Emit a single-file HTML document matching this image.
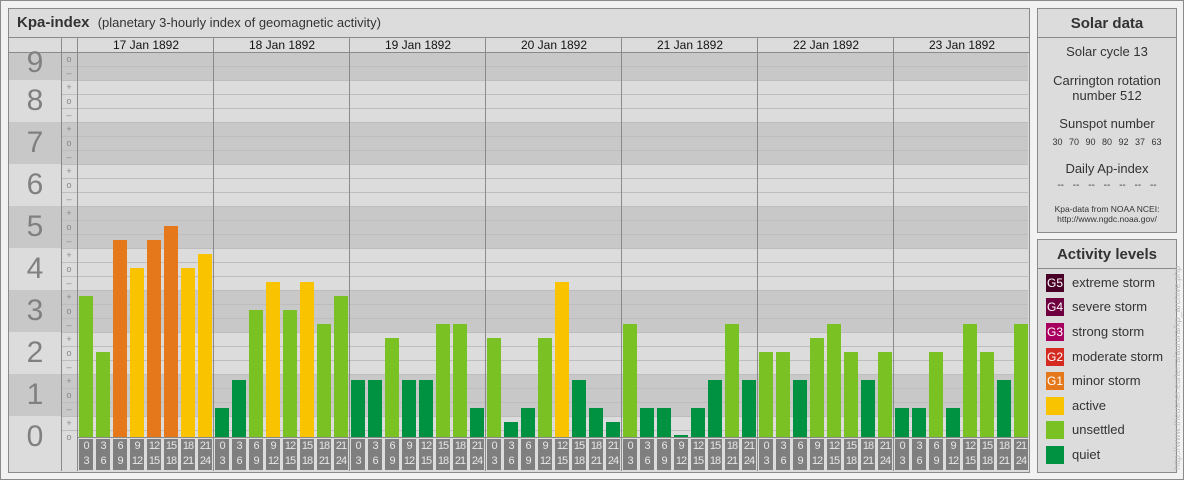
<!DOCTYPE html><html><head><style>
*{margin:0;padding:0;box-sizing:border-box}
body{width:1184px;height:480px;background:#f2f2f2;font-family:"Liberation Sans",sans-serif;position:relative;overflow:hidden}
.a{position:absolute}
.pan{position:absolute;background:#dcdcdc;border:1px solid #8a8a8a}
.band{position:absolute;left:9px;width:1019px}
.hl{position:absolute;left:61px;width:967px;height:1px;background:#bdbdbd}
.num{position:absolute;left:9px;width:52px;text-align:center;font-size:30px;color:#808080;height:42px;line-height:42px}
.sg{position:absolute;left:61px;width:16px;text-align:center;font-size:9px;color:#888;line-height:14px;height:14px}
.b{position:absolute;width:14px;bottom:43px}
.q{background:#009240}.u{background:#7ac124}.y{background:#f9c300}.o{background:#e5781a}
.t{position:absolute;top:439px;width:14px;height:31px;background:#7f7f7f;color:#e8e8e8;font-size:11px;line-height:15px;text-align:center;letter-spacing:-1px}
.vs{position:absolute;top:38px;width:1px;height:433px;background:#8a8a8a}
.dt{position:absolute;top:38px;width:136px;text-align:center;font-size:12px;line-height:14px;color:#111}
.lg{position:absolute;left:1046px;width:18px;height:18px;color:#fff;font-size:12px;line-height:18px;text-align:center}
.ll{position:absolute;left:1072px;font-size:13px;color:#333;line-height:18px}
.c{position:absolute;left:1038px;width:138px;text-align:center;color:#333}
</style></head><body>
<div class="a" style="left:0;top:0;width:1184px;height:480px;border:1px solid #8a8a8a"></div>
<div class="pan" style="left:8px;top:8px;width:1022px;height:465px"></div>
<div class="a" style="left:17px;top:14px;font-size:15px;font-weight:bold;color:#333">Kpa-index <span style="font-weight:normal;font-size:13px;margin-left:4px">(planetary 3-hourly index of geomagnetic activity)</span></div>
<div class="a" style="left:9px;top:37px;width:1020px;height:1px;background:#8a8a8a"></div>
<div class="band" style="top:52px;height:28px;background:#c8c8c8"></div>
<div class="band" style="top:122px;height:42px;background:#c8c8c8"></div>
<div class="band" style="top:206px;height:42px;background:#c8c8c8"></div>
<div class="band" style="top:290px;height:42px;background:#c8c8c8"></div>
<div class="band" style="top:374px;height:42px;background:#c8c8c8"></div>
<div class="a" style="left:9px;top:52px;width:1020px;height:1px;background:#8a8a8a"></div>
<div class="hl" style="top:66px"></div><div class="hl" style="top:80px"></div><div class="hl" style="top:94px"></div><div class="hl" style="top:108px"></div><div class="hl" style="top:122px"></div><div class="hl" style="top:136px"></div><div class="hl" style="top:150px"></div><div class="hl" style="top:164px"></div><div class="hl" style="top:178px"></div><div class="hl" style="top:192px"></div><div class="hl" style="top:206px"></div><div class="hl" style="top:220px"></div><div class="hl" style="top:234px"></div><div class="hl" style="top:248px"></div><div class="hl" style="top:262px"></div><div class="hl" style="top:276px"></div><div class="hl" style="top:290px"></div><div class="hl" style="top:304px"></div><div class="hl" style="top:318px"></div><div class="hl" style="top:332px"></div><div class="hl" style="top:346px"></div><div class="hl" style="top:360px"></div><div class="hl" style="top:374px"></div><div class="hl" style="top:388px"></div><div class="hl" style="top:402px"></div><div class="hl" style="top:416px"></div><div class="hl" style="top:430px"></div>
<div class="a" style="left:78px;top:437px;width:950px;height:1px;background:#8a8a8a"></div>
<div class="vs" style="left:61px"></div><div class="vs" style="left:77px"></div>
<div class="vs" style="left:213px"></div><div class="vs" style="left:349px"></div><div class="vs" style="left:485px"></div><div class="vs" style="left:621px"></div><div class="vs" style="left:757px"></div><div class="vs" style="left:893px"></div>
<div class="dt" style="left:78px">17 Jan 1892</div><div class="dt" style="left:214px">18 Jan 1892</div><div class="dt" style="left:350px">19 Jan 1892</div><div class="dt" style="left:486px">20 Jan 1892</div><div class="dt" style="left:622px">21 Jan 1892</div><div class="dt" style="left:758px">22 Jan 1892</div><div class="dt" style="left:894px">23 Jan 1892</div>
<div class="num" style="top:42px">9</div><div class="num" style="top:80px">8</div><div class="num" style="top:122px">7</div><div class="num" style="top:164px">6</div><div class="num" style="top:206px">5</div><div class="num" style="top:248px">4</div><div class="num" style="top:290px">3</div><div class="num" style="top:332px">2</div><div class="num" style="top:374px">1</div><div class="num" style="top:416px">0</div>
<div class="sg" style="top:52px">o</div><div class="sg" style="top:66px">–</div>
<div class="sg" style="top:80px">+</div><div class="sg" style="top:94px">o</div><div class="sg" style="top:108px">–</div>
<div class="sg" style="top:122px">+</div><div class="sg" style="top:136px">o</div><div class="sg" style="top:150px">–</div>
<div class="sg" style="top:164px">+</div><div class="sg" style="top:178px">o</div><div class="sg" style="top:192px">–</div>
<div class="sg" style="top:206px">+</div><div class="sg" style="top:220px">o</div><div class="sg" style="top:234px">–</div>
<div class="sg" style="top:248px">+</div><div class="sg" style="top:262px">o</div><div class="sg" style="top:276px">–</div>
<div class="sg" style="top:290px">+</div><div class="sg" style="top:304px">o</div><div class="sg" style="top:318px">–</div>
<div class="sg" style="top:332px">+</div><div class="sg" style="top:346px">o</div><div class="sg" style="top:360px">–</div>
<div class="sg" style="top:374px">+</div><div class="sg" style="top:388px">o</div><div class="sg" style="top:402px">–</div>
<div class="sg" style="top:416px">+</div><div class="sg" style="top:430px">o</div>
<div class="b u" style="left:79px;height:141px"></div><div class="b u" style="left:96px;height:85px"></div><div class="b o" style="left:113px;height:197px"></div><div class="b y" style="left:130px;height:169px"></div><div class="b o" style="left:147px;height:197px"></div><div class="b o" style="left:164px;height:211px"></div><div class="b y" style="left:181px;height:169px"></div><div class="b y" style="left:198px;height:183px"></div>
<div class="b q" style="left:215px;height:29px"></div><div class="b q" style="left:232px;height:57px"></div><div class="b u" style="left:249px;height:127px"></div><div class="b y" style="left:266px;height:155px"></div><div class="b u" style="left:283px;height:127px"></div><div class="b y" style="left:300px;height:155px"></div><div class="b u" style="left:317px;height:113px"></div><div class="b u" style="left:334px;height:141px"></div>
<div class="b q" style="left:351px;height:57px"></div><div class="b q" style="left:368px;height:57px"></div><div class="b u" style="left:385px;height:99px"></div><div class="b q" style="left:402px;height:57px"></div><div class="b q" style="left:419px;height:57px"></div><div class="b u" style="left:436px;height:113px"></div><div class="b u" style="left:453px;height:113px"></div><div class="b q" style="left:470px;height:29px"></div>
<div class="b u" style="left:487px;height:99px"></div><div class="b q" style="left:504px;height:15px"></div><div class="b q" style="left:521px;height:29px"></div><div class="b u" style="left:538px;height:99px"></div><div class="b y" style="left:555px;height:155px"></div><div class="b q" style="left:572px;height:57px"></div><div class="b q" style="left:589px;height:29px"></div><div class="b q" style="left:606px;height:15px"></div>
<div class="b u" style="left:623px;height:113px"></div><div class="b q" style="left:640px;height:29px"></div><div class="b q" style="left:657px;height:29px"></div><div class="b q" style="left:674px;height:2px"></div><div class="b q" style="left:691px;height:29px"></div><div class="b q" style="left:708px;height:57px"></div><div class="b u" style="left:725px;height:113px"></div><div class="b q" style="left:742px;height:57px"></div>
<div class="b u" style="left:759px;height:85px"></div><div class="b u" style="left:776px;height:85px"></div><div class="b q" style="left:793px;height:57px"></div><div class="b u" style="left:810px;height:99px"></div><div class="b u" style="left:827px;height:113px"></div><div class="b u" style="left:844px;height:85px"></div><div class="b q" style="left:861px;height:57px"></div><div class="b u" style="left:878px;height:85px"></div>
<div class="b q" style="left:895px;height:29px"></div><div class="b q" style="left:912px;height:29px"></div><div class="b u" style="left:929px;height:85px"></div><div class="b q" style="left:946px;height:29px"></div><div class="b u" style="left:963px;height:113px"></div><div class="b u" style="left:980px;height:85px"></div><div class="b q" style="left:997px;height:57px"></div><div class="b u" style="left:1014px;height:113px"></div>
<div class="t" style="left:79px">0<br>3</div><div class="t" style="left:96px">3<br>6</div><div class="t" style="left:113px">6<br>9</div><div class="t" style="left:130px">9<br>12</div><div class="t" style="left:147px">12<br>15</div><div class="t" style="left:164px">15<br>18</div><div class="t" style="left:181px">18<br>21</div><div class="t" style="left:198px">21<br>24</div>
<div class="t" style="left:215px">0<br>3</div><div class="t" style="left:232px">3<br>6</div><div class="t" style="left:249px">6<br>9</div><div class="t" style="left:266px">9<br>12</div><div class="t" style="left:283px">12<br>15</div><div class="t" style="left:300px">15<br>18</div><div class="t" style="left:317px">18<br>21</div><div class="t" style="left:334px">21<br>24</div>
<div class="t" style="left:351px">0<br>3</div><div class="t" style="left:368px">3<br>6</div><div class="t" style="left:385px">6<br>9</div><div class="t" style="left:402px">9<br>12</div><div class="t" style="left:419px">12<br>15</div><div class="t" style="left:436px">15<br>18</div><div class="t" style="left:453px">18<br>21</div><div class="t" style="left:470px">21<br>24</div>
<div class="t" style="left:487px">0<br>3</div><div class="t" style="left:504px">3<br>6</div><div class="t" style="left:521px">6<br>9</div><div class="t" style="left:538px">9<br>12</div><div class="t" style="left:555px">12<br>15</div><div class="t" style="left:572px">15<br>18</div><div class="t" style="left:589px">18<br>21</div><div class="t" style="left:606px">21<br>24</div>
<div class="t" style="left:623px">0<br>3</div><div class="t" style="left:640px">3<br>6</div><div class="t" style="left:657px">6<br>9</div><div class="t" style="left:674px">9<br>12</div><div class="t" style="left:691px">12<br>15</div><div class="t" style="left:708px">15<br>18</div><div class="t" style="left:725px">18<br>21</div><div class="t" style="left:742px">21<br>24</div>
<div class="t" style="left:759px">0<br>3</div><div class="t" style="left:776px">3<br>6</div><div class="t" style="left:793px">6<br>9</div><div class="t" style="left:810px">9<br>12</div><div class="t" style="left:827px">12<br>15</div><div class="t" style="left:844px">15<br>18</div><div class="t" style="left:861px">18<br>21</div><div class="t" style="left:878px">21<br>24</div>
<div class="t" style="left:895px">0<br>3</div><div class="t" style="left:912px">3<br>6</div><div class="t" style="left:929px">6<br>9</div><div class="t" style="left:946px">9<br>12</div><div class="t" style="left:963px">12<br>15</div><div class="t" style="left:980px">15<br>18</div><div class="t" style="left:997px">18<br>21</div><div class="t" style="left:1014px">21<br>24</div>
<div class="pan" style="left:1037px;top:8px;width:140px;height:225px"></div>
<div class="a" style="left:1038px;top:37px;width:138px;height:1px;background:#8a8a8a"></div>
<div class="c" style="top:15px;font-size:15px;font-weight:bold">Solar data</div>
<div class="c" style="top:44px;font-size:13px">Solar cycle 13</div>
<div class="c" style="top:73px;font-size:13px;line-height:15px">Carrington rotation<br>number 512</div>
<div class="c" style="top:116px;font-size:13px">Sunspot number</div>
<div class="c" style="top:137px;font-size:9px;word-spacing:4px">30 70 90 80 92 37 63</div>
<div class="c" style="top:161px;font-size:13px">Daily Ap-index</div>
<div class="c" style="top:180px;font-size:10px;word-spacing:6px">-- -- -- -- -- -- --</div>
<div class="c" style="top:204px;font-size:8.5px;line-height:10px">Kpa-data from NOAA NCEI:<br>http://www.ngdc.noaa.gov/</div>
<div class="pan" style="left:1037px;top:239px;width:140px;height:234px"></div>
<div class="a" style="left:1038px;top:268px;width:138px;height:1px;background:#8a8a8a"></div>
<div class="c" style="top:246px;font-size:15px;font-weight:bold">Activity levels</div>
<div class="lg" style="top:274px;background:#4a0026">G5</div><div class="ll" style="top:274px">extreme storm</div>
<div class="lg" style="top:298px;background:#6e0040">G4</div><div class="ll" style="top:298px">severe storm</div>
<div class="lg" style="top:323px;background:#a8005e">G3</div><div class="ll" style="top:323px">strong storm</div>
<div class="lg" style="top:348px;background:#d42a20">G2</div><div class="ll" style="top:348px">moderate storm</div>
<div class="lg" style="top:372px;background:#e5781a">G1</div><div class="ll" style="top:372px">minor storm</div>
<div class="lg" style="top:397px;background:#f9c300"></div><div class="ll" style="top:397px">active</div>
<div class="lg" style="top:421px;background:#7ac124"></div><div class="ll" style="top:421px">unsettled</div>
<div class="lg" style="top:446px;background:#009240"></div><div class="ll" style="top:446px">quiet</div>
<div class="a" style="left:1172px;top:470px;transform:rotate(-90deg);transform-origin:0 0;font-size:9px;color:#bbb;white-space:nowrap">http://www.theusner.eu/terra/aurora/kp_archive.php</div>
</body></html>
